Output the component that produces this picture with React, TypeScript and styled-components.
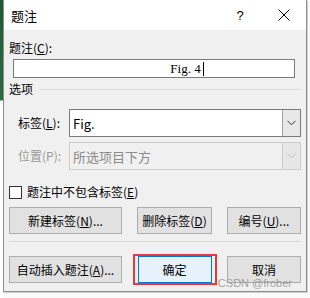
import styled, { createGlobalStyle } from "styled-components";

const Global = createGlobalStyle`
  html, body { margin: 0; padding: 0; background: #fff; }
  body { font-family: "Noto Sans CJK SC", "Noto Sans", sans-serif; font-size: 12px; color: #000; }
`;

const Page = styled.div`
  display: flex;
  width: 310px;
  height: 298px;
  overflow: hidden;
  background: #fafafa;
`;

const Strip = styled.div`
  width: 3px;
  flex: none;
  background: linear-gradient(#1f5a34 0, #2b6b3f 100px, #ffffff 101px);
`;

const Dialog = styled.div`
  position: relative;
  width: 302px;
  height: 291px;
  border: 1px solid #8d8d8d;
  border-top: none;
  background: #f0f0f0;
  display: flex;
  flex-direction: column;
  box-shadow: 1px 1px 0 #cfcfcf;
`;

const TitleBar = styled.div`
  height: 30px;
  background: #fff;
  display: flex;
  align-items: center;
  padding-left: 7px;
`;

const Title = styled.span`
  flex: 1;
  font-size: 13px;
`;

const TitleBtn = styled.span`
  width: 44px;
  text-align: center;
  font-family: "Liberation Sans", sans-serif;
  font-size: 13px;
  display: flex;
  justify-content: center;
`;

const Body = styled.div`
  padding: 0 5px 0 5px;
  display: flex;
  flex-direction: column;
`;

const Label = styled.div<{ $muted?: boolean }>`
  font-size: 12px;
  line-height: 16px;
  color: ${({ $muted }) => ($muted ? "#9a9a9a" : "#000")};
`;

const Input = styled.div`
  margin: 3px 6px 0 4px;
  height: 17px;
  border: 1px solid #7a7a7a;
  background: #fff;
  display: flex;
  align-items: center;
  justify-content: center;
  font-family: "Liberation Serif", serif;
  font-size: 13px;
`;

const Caret = styled.span`
  display: inline-block;
  width: 1px;
  height: 14px;
  background: #000;
  margin-left: 2px;
`;

const Group = styled.div`
  display: flex;
  align-items: center;
  gap: 6px;
  margin-top: 3px;
`;

const Rule = styled.div`
  flex: 1;
  height: 1px;
  background: #dadada;
`;

const Row = styled.div`
  display: flex;
  align-items: center;
  margin-top: 5px;
  padding-left: 9px;
`;

const RowLabel = styled(Label)`
  width: 51px;
`;

const Combo = styled.div<{ $disabled?: boolean }>`
  flex: 1;
  height: 26px;
  border: 1px solid ${({ $disabled }) => ($disabled ? "#cccccc" : "#7a7a7a")};
  background: ${({ $disabled }) => ($disabled ? "#f0f0f0" : "#fff")};
  color: ${({ $disabled }) => ($disabled ? "#8a8a8a" : "#000")};
  display: flex;
  align-items: stretch;
`;

const ComboText = styled.span`
  flex: 1;
  display: flex;
  align-items: center;
  padding-left: 3px;
  font-size: 13px;
`;

const ComboArrow = styled.span<{ $disabled?: boolean }>`
  width: 17px;
  border-left: 1px solid ${({ $disabled }) => ($disabled ? "#cccccc" : "#a0a0a0")};
  background: ${({ $disabled }) => ($disabled ? "#e6e6e6" : "#e8e8e8")};
  display: flex;
  align-items: center;
  justify-content: center;
`;

const CheckRow = styled.div`
  display: flex;
  align-items: center;
  gap: 5px;
  margin-top: 14px;
`;

const Box = styled.span`
  width: 11px;
  height: 11px;
  border: 1px solid #333;
  background: #fff;
`;

const Buttons = styled.div`
  display: flex;
  align-items: center;
  margin-top: 7px;
`;

const Btn = styled.div<{ $w: number; $default?: boolean }>`
  width: ${({ $w }) => $w}px;
  height: 27px;
  box-sizing: border-box;
  border: 1px solid ${({ $default }) => ($default ? "#0078d7" : "#adadad")};
  background: ${({ $default }) => ($default ? "#e5f1fb" : "#e1e1e1")};
  display: flex;
  align-items: center;
  justify-content: center;
  font-size: 12px;
`;

const Highlight = styled.div`
  border: 2px solid #e8383d;
  padding: 0 3px;
  box-sizing: border-box;
  display: flex;
`;

const Spacer = styled.div`
  flex: 1;
`;

const Sep = styled.div`
  height: 1px;
  background: #d6d6d6;
  margin-top: 7px;
`;

const Footer = styled.div`
  display: flex;
  align-items: center;
  margin-top: 12px;
`;

const Watermark = styled.span`
  position: absolute;
  right: 14px;
  bottom: 1px;
  font-family: "Liberation Sans", sans-serif;
  font-size: 11px;
  line-height: 13px;
  color: rgba(140, 140, 140, 0.8);
`;

const U = styled.u`
  text-underline-offset: 1px;
`;

const Chevron = ({ color }: { color: string }) => (
  <svg width="9" height="6" viewBox="0 0 9 6">
    <path d="M0.5 0.8 L4.5 4.8 L8.5 0.8" fill="none" stroke={color} strokeWidth="1" />
  </svg>
);

export default function App() {
  return (
    <>
      <Global />
      <Page>
        <Strip />
        <Dialog>
          <TitleBar>
            <Title>题注</Title>
            <TitleBtn>?</TitleBtn>
            <TitleBtn>
              <svg width="12" height="12" viewBox="0 0 12 12">
                <path d="M0.5 0.5 L11.5 11.5 M11.5 0.5 L0.5 11.5" stroke="#000" strokeWidth="1" />
              </svg>
            </TitleBtn>
          </TitleBar>
          <Body>
            <Label style={{ marginTop: 10 }}>
              题注(<U>C</U>):
            </Label>
            <Input>
              <span style={{ marginLeft: 66 }}>Fig. 4</span>
              <Caret />
            </Input>
            <Group>
              <Label>选项</Label>
              <Rule />
            </Group>
            <Row style={{ marginTop: 12 }}>
              <RowLabel>
                标签(<U>L</U>):
              </RowLabel>
              <Combo>
                <ComboText>Fig.</ComboText>
                <ComboArrow>
                  <Chevron color="#333" />
                </ComboArrow>
              </Combo>
            </Row>
            <Row>
              <RowLabel $muted>位置(P):</RowLabel>
              <Combo $disabled>
                <ComboText>所选项目下方</ComboText>
                <ComboArrow $disabled>
                  <Chevron color="#bdbdbd" />
                </ComboArrow>
              </Combo>
            </Row>
            <CheckRow>
              <Box />
              <Label>
                题注中不包含标签(<U>E</U>)
              </Label>
            </CheckRow>
            <Buttons>
              <Btn $w={113}>
                新建标签(<U>N</U>)...
              </Btn>
              <Spacer />
              <Btn $w={75}>
                删除标签(<U>D</U>)
              </Btn>
              <Spacer />
              <Btn $w={74}>
                编号(<U>U</U>)...
              </Btn>
            </Buttons>
            <Sep />
            <Footer>
              <Btn $w={113}>
                自动插入题注(<U>A</U>)...
              </Btn>
              <Spacer />
              <Highlight>
                <Btn $w={74} $default>
                  确定
                </Btn>
              </Highlight>
              <Spacer />
              <Btn $w={74}>取消</Btn>
            </Footer>
          </Body>
          <Watermark>CSDN @frober</Watermark>
        </Dialog>
      </Page>
    </>
  );
}
